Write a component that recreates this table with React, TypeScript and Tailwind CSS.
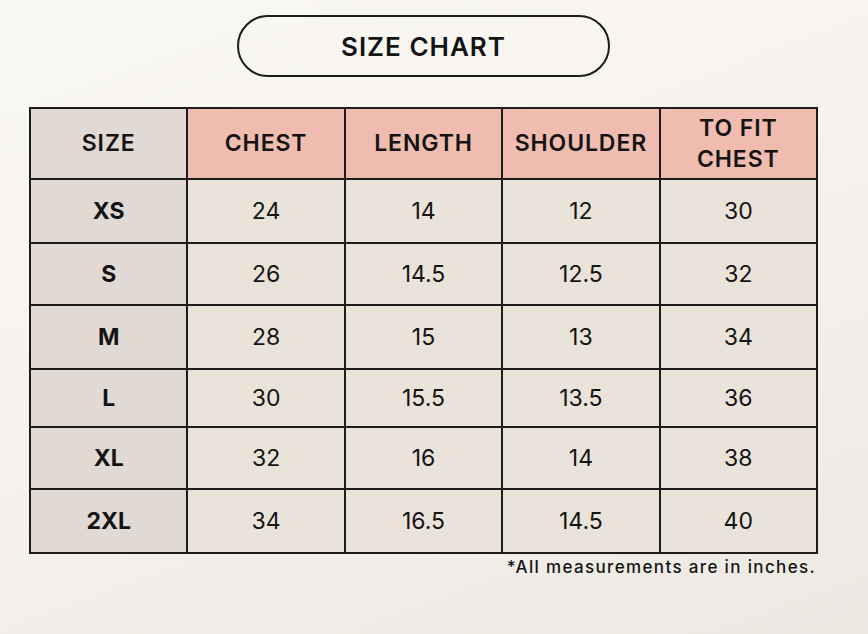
const headers = ["SIZE", "CHEST", "LENGTH", "SHOULDER", "TO FIT CHEST"];

const rows: { size: string; values: string[]; h: string }[] = [
  { size: "XS", values: ["24", "14", "12", "30"], h: "h-[62px]" },
  { size: "S", values: ["26", "14.5", "12.5", "32"], h: "h-[60px]" },
  { size: "M", values: ["28", "15", "13", "34"], h: "h-[62px]" },
  { size: "L", values: ["30", "15.5", "13.5", "36"], h: "h-[56px]" },
  { size: "XL", values: ["32", "16", "14", "38"], h: "h-[60px]" },
  { size: "2XL", values: ["34", "16.5", "14.5", "40"], h: "h-[62px]" },
];

export default function App() {
  return (
    <div
      className="w-[868px] h-[634px] bg-[linear-gradient(160deg,#faf8f3_0%,#f6f3ee_45%,#ece8e2_100%)] text-[#141414]"
      style={{ fontFamily: "Inter, 'Liberation Sans', sans-serif" }}
    >
      <div className="ml-[29px] w-[789px] pt-[15px] flex flex-col">
        <div className="mx-auto w-[373px] h-[62px] rounded-full border-2 border-[#1c1c1c] flex items-center justify-center">
          <span className="text-[26px] font-semibold tracking-[1px]">SIZE CHART</span>
        </div>

        <div className="mt-[30px] grid grid-cols-5 gap-[2px] p-[2px] bg-[#1c1c1c]">
          {headers.map((h, i) => (
            <div
              key={h}
              className={`h-[69px] flex items-center justify-center text-center text-[23px] font-semibold leading-[31px] tracking-[0.9px] ${
                i === 0 ? "bg-[#e0d9d4]" : "bg-[#efbcaf]"
              } ${i === 4 ? "px-8" : ""}`}
            >
              {h}
            </div>
          ))}
          {rows.map((r) => (
            <div key={r.size} className="contents">
              <div
                className={`${r.h} bg-[#e0d9d4] flex items-center justify-center text-[23px] font-bold`}
              >
                {r.size}
              </div>
              {r.values.map((v, j) => (
                <div
                  key={j}
                  className={`${r.h} bg-[#eae3d9] flex items-center justify-center text-[23px]`}
                >
                  {v}
                </div>
              ))}
            </div>
          ))}
        </div>

        <p className="self-end mr-[2px] mt-[1px] text-[17px] font-medium tracking-[1.35px] leading-[24px]">
          *All measurements are in inches.
        </p>
      </div>
    </div>
  );
}
